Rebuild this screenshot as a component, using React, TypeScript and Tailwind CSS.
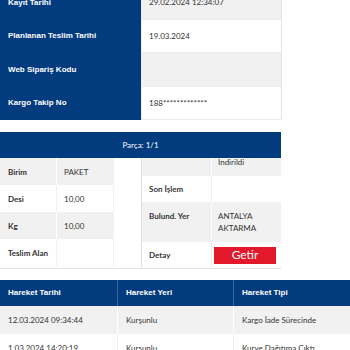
const BLUE = "bg-[#023b7e]";

const topRows = [
  { label: "Kayıt Tarihi", value: "29.02.2024 12:34:07", gray: true },
  { label: "Planlanan Teslim Tarihi", value: "19.03.2024", gray: false },
  { label: "Web Sipariş Kodu", value: "", gray: true },
  { label: "Kargo Takip No", value: "188*************", gray: false },
];

const partRows = [
  { label: "Birim", value: "PAKET", gray: true },
  { label: "Desi", value: "10,00", gray: false },
  { label: "Kg", value: "10,00", gray: true },
  { label: "Teslim Alan", value: "", gray: false },
];

const moves = [
  { date: "12.03.2024 09:34:44", place: "Kurşunlu", type: "Kargo İade Sürecinde" },
  { date: "1.03.2024 14:20:19", place: "Kurşunlu", type: "Kurye Dağıtıma Çıktı" },
];

export default function App() {
  return (
    <div className="w-[350px] h-[350px] overflow-hidden bg-white font-['Lato',sans-serif] text-[8px] text-[#333]">
      {/* ust bilgi tablosu */}
      <div className="w-[282px] -mt-[14px] border-r border-[#e4e4e4]">
        {topRows.map((r) => (
          <div key={r.label} className="flex h-[33.5px]">
            <div
              className={`w-[141px] ${BLUE} px-2 flex items-center text-white font-bold font-['Liberation_Sans',Arial,sans-serif]`}
            >
              {r.label}
            </div>
            <div
              className={`flex-1 flex items-center pl-[7px] border-l border-b border-[#ececec] ${
                r.gray ? "bg-[#f1f1f1]" : "bg-white"
              }`}
            >
              {r.value}
            </div>
          </div>
        ))}
      </div>

      {/* parca */}
      <div className="mt-3 w-[281px] border-b border-[#e2e2e2]">
        <div className={`h-[26px] ${BLUE} flex items-center justify-center text-white`}>
          Parça: 1/1
        </div>
        <div className="flex h-[110px]">
          <div className="w-[113px]">
            {partRows.map((r) => (
              <div
                key={r.label}
                className={`flex h-[27px] items-center ${r.gray ? "bg-[#f1f1f1]" : "bg-white"}`}
              >
                <div
                  className={`w-[57px] h-full flex items-center pl-2 font-bold border-r ${
                    r.gray ? "border-white" : "border-[#f1f1f1]"
                  }`}
                >
                  {r.label}
                </div>
                <div className="flex-1 pl-[7px]">{r.value}</div>
              </div>
            ))}
          </div>
          <div className="w-[28px] border-l border-[#f3f3f3]" />
          <div className="flex-1 overflow-hidden border-l border-[#e2e2e2]">
            <div className="-mt-[22px] leading-[12px]">
              <div className="flex bg-[#f1f1f1] h-[40px]">
                <div className="w-[70px] border-r border-white" />
                <div className="flex-1 flex items-end pb-2 pl-[6px]">Indirildi</div>
              </div>
              <div className="flex bg-white h-[26px] items-center">
                <div className="w-[70px] h-full flex items-center pl-[7px] font-bold border-r border-[#eeeeee]">
                  Son İşlem
                </div>
                <div className="flex-1" />
              </div>
              <div className="flex bg-[#f1f1f1]">
                <div className="w-[70px] py-2 pl-[7px] font-bold border-r border-white">Bulund. Yer</div>
                <div className="flex-1 py-2 pl-[6px]">
                  ANTALYA
                  <br />
                  AKTARMA
                </div>
              </div>
              <div className="flex bg-white h-[26px] items-center">
                <div className="w-[70px] h-full flex items-center pl-[7px] font-bold border-r border-[#eeeeee]">
                  Detay
                </div>
                <div className="flex-1 pl-[2px]">
                  <button className="w-[62px] h-[17px] bg-[#e3192b] text-white text-[12px] leading-none flex items-center justify-center">
                    Getir
                  </button>
                </div>
              </div>
            </div>
          </div>
        </div>
      </div>

      {/* hareketler */}
      <div className="mt-[11px] w-[350px]">
        <div
          className={`grid grid-cols-[117px_116px_117px] h-[26px] ${BLUE} text-white font-bold font-['Liberation_Sans',Arial,sans-serif]`}
        >
          <div className="flex items-center pl-2">Hareket Tarihi</div>
          <div className="flex items-center pl-2 border-l border-[#3d66a3]">Hareket Yeri</div>
          <div className="flex items-center pl-2 border-l border-[#3d66a3]">Hareket Tipi</div>
        </div>
        {moves.map((m, i) => (
          <div
            key={m.date}
            className={`grid grid-cols-[117px_116px_117px] h-[28px] ${
              i % 2 === 0 ? "bg-[#f1f1f1]" : "bg-white"
            }`}
          >
            <div className="flex items-center pl-2">{m.date}</div>
            <div
              className={`flex items-center pl-2 border-l ${
                i % 2 === 0 ? "border-white" : "border-[#eeeeee]"
              }`}
            >
              {m.place}
            </div>
            <div
              className={`flex items-center pl-2 border-l ${
                i % 2 === 0 ? "border-white" : "border-[#eeeeee]"
              }`}
            >
              {m.type}
            </div>
          </div>
        ))}
      </div>
    </div>
  );
}
